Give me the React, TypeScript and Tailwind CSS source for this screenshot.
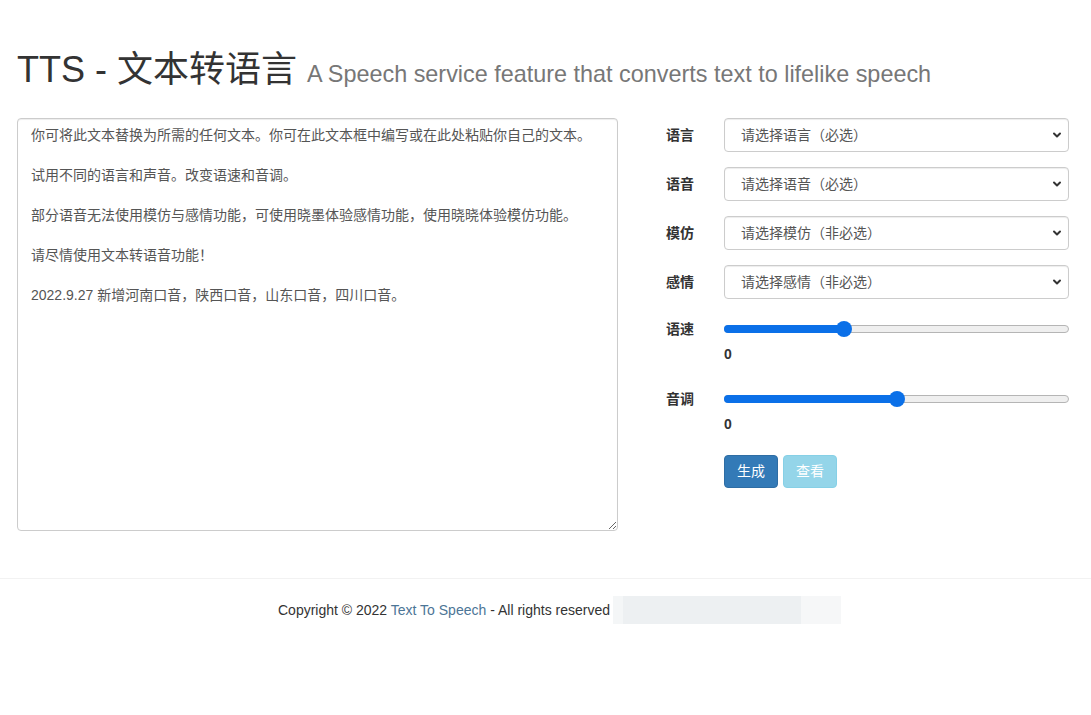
import { ChevronDown } from "lucide-react";

const SELECTS = [
  { label: "语言", placeholder: "请选择语言（必选）" },
  { label: "语音", placeholder: "请选择语音（必选）" },
  { label: "模仿", placeholder: "请选择模仿（非必选）" },
  { label: "感情", placeholder: "请选择感情（非必选）" },
];

const SLIDERS = [
  { label: "语速", pct: 34 },
  { label: "音调", pct: 50 },
];

const DEFAULT_TEXT =
  "你可将此文本替换为所需的任何文本。你可在此文本框中编写或在此处粘贴你自己的文本。\n\n试用不同的语言和声音。改变语速和音调。\n\n部分语音无法使用模仿与感情功能，可使用晓墨体验感情功能，使用晓晓体验模仿功能。\n\n请尽情使用文本转语音功能！\n\n2022.9.27 新增河南口音，陕西口音，山东口音，四川口音。";

function Slider({ pct }: { pct: number }) {
  // thumb travels between 8px and width-8px
  return (
    <div className="relative h-4 w-full">
      <div className="absolute left-0 right-0 top-[4px] h-2 rounded-full border border-[#b5b5b5] bg-[#efefef]" />
      <div
        className="absolute left-0 top-[4px] h-2 rounded-full bg-[#0b70e8]"
        style={{ width: `calc(8px + (100% - 16px) * ${pct / 100})` }}
      />
      <div
        className="absolute top-0 h-4 w-4 rounded-full bg-[#0b70e8]"
        style={{ left: `calc((100% - 16px) * ${pct / 100})` }}
      />
    </div>
  );
}

export default function App() {
  return (
    <div
      className="min-h-[715px] bg-white text-[14px] text-[#333]"
      style={{ fontFamily: '"Liberation Sans", "Noto Sans CJK SC", sans-serif' }}
    >
      <div className="pl-[17px] pt-[50px]">
        <h1 className="h-[40px] text-[36px] leading-[40px] font-normal text-[#333] whitespace-nowrap">
          TTS - 文本转语言{" "}
          <small className="text-[23.4px] text-[#777]">
            A Speech service feature that converts text to lifelike speech
          </small>
        </h1>
      </div>

      <div className="mt-[28px] flex pl-[17px]">
        <textarea
          defaultValue={DEFAULT_TEXT}
          className="h-[413px] w-[601px] rounded-[4px] border border-[#ccc] px-[13px] py-[6px] text-[14px] leading-[20px] text-[#555] shadow-[inset_0_1px_1px_rgba(0,0,0,0.075)] outline-none"
        />

        <div className="ml-[48px] w-[403px]">
          {SELECTS.map((s) => (
            <div key={s.label} className="mb-[15px] flex items-center">
              <label className="w-[58px] font-bold">{s.label}</label>
              <div className="relative flex-1">
                <select className="h-[34px] w-full appearance-none rounded-[4px] border border-[#ccc] bg-white pl-[16px] text-[14px] text-[#555] shadow-[inset_0_1px_1px_rgba(0,0,0,0.075)] outline-none">
                  <option>{s.placeholder}</option>
                </select>
                <ChevronDown
                  className="pointer-events-none absolute right-[6px] top-[11px] h-[12px] w-[12px] text-[#333]"
                  strokeWidth={4}
                />
              </div>
            </div>
          ))}

          {SLIDERS.map((s, i) => (
            <div key={s.label} className={i === 0 ? "mb-[20px]" : "mb-[21px]"}>
              <div className="flex items-center pt-[5px]">
                <label className="w-[58px] font-bold leading-[20px]">{s.label}</label>
                <div className="flex-1">
                  <Slider pct={s.pct} />
                </div>
              </div>
              <div className="ml-[58px] mt-[5px] font-bold leading-[20px]">0</div>
            </div>
          ))}

          <div className="ml-[58px] flex gap-[5px]">
            <button className="h-[33px] rounded-[4px] border border-[#2e6da4] bg-[#337ab7] px-[12px] text-[14px] text-white">
              生成
            </button>
            <button className="h-[33px] rounded-[4px] border border-[#46b8da] bg-[#5bc0de] px-[12px] text-[14px] text-white opacity-65">
              查看
            </button>
          </div>
        </div>
      </div>

      <footer className="mt-[47px] border-t border-[#f2f2f2] pt-[17px]">
        <div className="flex items-center pl-[278px]">
          <span className="whitespace-nowrap leading-[20px]">
            Copyright © 2022 <span className="text-[#4c7596]">Text To Speech</span> - All rights reserved
          </span>
          <span className="ml-[3px] flex h-[28px] w-[228px]">
            <span className="h-full w-[10px] bg-[#f4f6f7]" />
            <span className="h-full w-[178px] bg-[#edf0f2]" />
            <span className="h-full w-[40px] bg-[#f6f7f8]" />
          </span>
        </div>
      </footer>
    </div>
  );
}
